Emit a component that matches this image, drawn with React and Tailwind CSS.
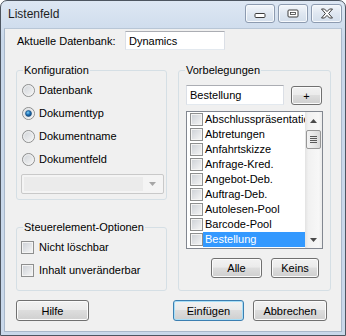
const EINTRAEGE = [
  'Abschlusspräsentation',
  'Abtretungen',
  'Anfahrtskizze',
  'Anfrage-Kred.',
  'Angebot-Deb.',
  'Auftrag-Deb.',
  'Autolesen-Pool',
  'Barcode-Pool',
  'Bestellung',
];

const SCHRIFT = "font-['Liberation_Sans',Arial,sans-serif] text-[11px] leading-[16px] text-black";
const KNOPF_BG = 'bg-[linear-gradient(#f2f2f2_0%,#ebebeb_45%,#dddddd_50%,#cfcfcf_100%)]';

function Knopf({ children, className = '', standard = false }) {
  return (
    <div
      className={`flex items-center justify-center rounded-[3px] border ${KNOPF_BG} ${
        standard
          ? 'border-[#3c7fb1] shadow-[inset_0_0_0_1px_#a8def7]'
          : 'border-[#707070] shadow-[inset_0_0_0_1px_#fbfbfb]'
      } ${className}`}
    >
      {children}
    </div>
  );
}

function Checkbox({ className = '' }) {
  return (
    <div className={`w-[13px] h-[13px] shrink-0 border border-[#8e8f8f] bg-[linear-gradient(135deg,#cbcfd5,#f7f7f7)] shadow-[inset_0_0_0_1px_#f4f4f4] ${className}`} />
  );
}

function Radio({ aktiv }) {
  return (
    <svg width="13" height="13" viewBox="0 0 13 13" className="shrink-0">
      <defs>
        <linearGradient id="rg" x1="0" y1="0" x2="1" y2="1">
          <stop offset="0" stopColor="#cdd1d6" />
          <stop offset="1" stopColor="#f8f8f8" />
        </linearGradient>
        <radialGradient id="rd" cx="0.4" cy="0.35" r="0.7">
          <stop offset="0" stopColor="#7fd0f8" />
          <stop offset="0.5" stopColor="#1f73b8" />
          <stop offset="1" stopColor="#0c3f73" />
        </radialGradient>
      </defs>
      <circle cx="6.5" cy="6.5" r="6" fill="url(#rg)" stroke="#8e8f8f" />
      <circle cx="6.5" cy="6.5" r="4.8" fill="none" stroke="#f4f4f4" strokeWidth="0.8" />
      {aktiv && <circle cx="6.5" cy="6.5" r="3" fill="url(#rd)" stroke="#1b4e7e" strokeWidth="0.6" />}
    </svg>
  );
}

function Gruppe({ titel, className = '', children }) {
  return (
    <fieldset className={`border border-[#d5dfe5] rounded-[3px] px-0 ${className}`}>
      <legend className="ml-[6px] px-[1px] leading-[16px] whitespace-nowrap">{titel}</legend>
      {children}
    </fieldset>
  );
}

function Fensterknopf({ children, className = '' }) {
  return (
    <div className={`h-[19px] flex items-center justify-center rounded-[3px] border border-[#8d9bb0] bg-[linear-gradient(#f3f6fa,#dfe7f1_50%,#d3deeb)] shadow-[inset_0_0_0_1px_#f6f9fc] ${className}`}>
      {children}
    </div>
  );
}

export default function App() {
  return (
    <div className={`w-[346px] h-[336px] flex flex-col border border-[#4d5560] rounded-t-[7px] bg-[linear-gradient(#dde7f3,#c9d8ea_40px,#c9d8ea)] ${SCHRIFT}`}>
      {/* Titelleiste */}
      <div className="h-[27px] flex items-start justify-between">
        <div className="pl-[7px] pt-[6px] font-['Liberation_Sans',Arial,sans-serif] text-[12px] leading-[15px] text-[#1e1e1e]">
          Listenfeld
        </div>
        <div className="flex gap-[3px] mt-[3px] mr-[3px]">
          <Fensterknopf className="w-[30px]">
            <svg width="12" height="8" viewBox="0 0 12 8">
              <rect x="1" y="3.5" width="10" height="4" rx="1" fill="#fff" stroke="#3d3d3d" />
            </svg>
          </Fensterknopf>
          <Fensterknopf className="w-[30px]">
            <svg width="12" height="9" viewBox="0 0 12 9">
              <rect x="1" y="1" width="10" height="7" rx="1" fill="#fff" stroke="#3d3d3d" />
              <rect x="3.5" y="3.5" width="5" height="2" fill="#fff" stroke="#3d3d3d" strokeWidth="0.8" />
            </svg>
          </Fensterknopf>
          <Fensterknopf className="w-[31px]">
            <svg width="14" height="11" viewBox="0 0 14 11">
              <path
                d="M1.5 1 H4.5 L7 3.6 L9.5 1 H12.5 L8.6 5.5 L12.5 10 H9.5 L7 7.4 L4.5 10 H1.5 L5.4 5.5 Z"
                fill="#fff"
                stroke="#3d3d3d"
                strokeLinejoin="round"
              />
            </svg>
          </Fensterknopf>
        </div>
      </div>

      {/* Inhalt */}
      <div className="flex-1 mx-[3px] mb-[3px] bg-[#f0f0f0] border border-[#a9b8ca] border-t-[#b8c6d6]">
        <div className="flex items-center pt-[2px]">
          <div className="w-[120px] pl-[12px] whitespace-nowrap">Aktuelle Datenbank:</div>
          <div className="w-[100px] h-[19px] flex items-center pl-[3px] bg-white border border-[#abadb3] border-x-[#dbdfe6] border-b-[#e3e9ef]">
            Dynamics
          </div>
        </div>

        <div className="grid grid-cols-[151px_153px] gap-x-[11px] ml-[11px] mt-[12px]">
          <div className="flex flex-col">
            <Gruppe titel="Konfiguration" className="h-[138px]">
              <div className="flex flex-col gap-[7px] pt-[4px] pl-[5px]">
                {['Datenbank', 'Dokumenttyp', 'Dokumentname', 'Dokumentfeld'].map((t) => (
                  <div key={t} className="h-[16px] flex items-center gap-[4px]">
                    <Radio aktiv={t === 'Dokumenttyp'} />
                    <span>{t}</span>
                  </div>
                ))}
              </div>
              <div className="ml-[4px] mt-[7px] w-[143px] h-[20px] flex border border-[#c9c9c9] rounded-[2px] bg-[#f4f4f4] p-[2px]">
                <div className="flex-1 bg-[#ebebeb]" />
                <div className="w-[18px] flex items-center justify-center">
                  <svg width="7" height="4" viewBox="0 0 7 4">
                    <path d="M0 0 H7 L3.5 4 Z" fill="#a6a6a6" />
                  </svg>
                </div>
              </div>
            </Gruppe>

            <Gruppe titel="Steuerelement-Optionen" className="h-[72px] mt-[19px]">
              <div className="flex flex-col gap-[7px] pt-[4px] pl-[4px]">
                {['Nicht löschbar', 'Inhalt unveränderbar'].map((t) => (
                  <div key={t} className="h-[16px] flex items-center gap-[5px]">
                    <Checkbox />
                    <span>{t}</span>
                  </div>
                ))}
              </div>
            </Gruppe>
          </div>

          <Gruppe titel="Vorbelegungen" className="h-[229px]">
            <div className="flex items-start pt-[7px] pl-[7px]">
              <div className="w-[98px] h-[20px] flex items-center pl-[3px] bg-white border border-[#abadb3] border-x-[#dbdfe6] border-b-[#e3e9ef]">
                Bestellung
              </div>
              <Knopf className="w-[31px] h-[19px] ml-[7px] mt-[1px]">+</Knopf>
            </div>

            <div className="ml-[7px] mt-[6px] w-[137px] h-[138px] flex border border-[#828790] bg-white">
              <div className="flex-1 min-w-0 flex flex-col">
                {EINTRAEGE.map((e) => {
                  const aktiv = e === 'Bestellung';
                  return (
                    <div key={e} className="h-[15px] flex items-center">
                      <Checkbox className="ml-[3px]" />
                      <div className={`flex-1 min-w-0 h-[15px] flex items-center pl-[2px] whitespace-nowrap overflow-hidden leading-[15px] ${aktiv ? 'bg-[#3399ff] text-white' : ''}`}>
                        {e}
                      </div>
                    </div>
                  );
                })}
              </div>
              {/* Scrollleiste */}
              <div className="w-[17px] shrink-0 flex flex-col bg-[linear-gradient(90deg,#e3e3e3,#f1f1f1_20%,#f7f7f7_80%,#ececec)]">
                <div className="h-[17px] flex items-center justify-center">
                  <svg width="7" height="4" viewBox="0 0 7 4">
                    <path d="M0 4 H7 L3.5 0 Z" fill="#4a4a4a" />
                  </svg>
                </div>
                <div className="mx-[1px] mt-[1px] h-[19px] flex flex-col items-center justify-center gap-[1px] rounded-[2px] border border-[#979797] bg-[linear-gradient(90deg,#f3f3f3,#e8e8e8_50%,#d9d9d9)]">
                  <div className="w-[7px] h-[1px] bg-[#5a5a5a]" />
                  <div className="w-[7px] h-[1px] bg-[#5a5a5a]" />
                  <div className="w-[7px] h-[1px] bg-[#5a5a5a]" />
                  <div className="w-[7px] h-[1px] bg-[#5a5a5a]" />
                </div>
                <div className="flex-1" />
                <div className="h-[17px] flex items-center justify-center">
                  <svg width="7" height="4" viewBox="0 0 7 4">
                    <path d="M0 0 H7 L3.5 4 Z" fill="#4a4a4a" />
                  </svg>
                </div>
              </div>
            </div>

            <div className="flex gap-[9px] ml-[32px] mt-[9px]">
              <Knopf className="w-[51px] h-[20px]">Alle</Knopf>
              <Knopf className="w-[48px] h-[20px]">Keins</Knopf>
            </div>
          </Gruppe>
        </div>

        <div className="flex items-center mt-[9px] ml-[11px]">
          <Knopf className="w-[73px] h-[21px]">Hilfe</Knopf>
          <Knopf standard className="w-[71px] h-[21px] ml-[84px]">Einfügen</Knopf>
          <Knopf className="w-[74px] h-[21px] ml-[9px]">Abbrechen</Knopf>
        </div>
      </div>
    </div>
  );
}
